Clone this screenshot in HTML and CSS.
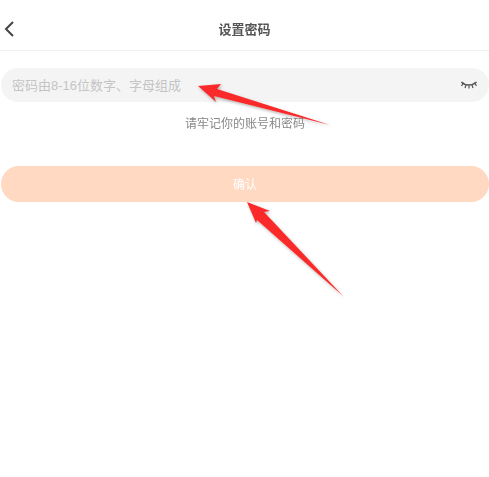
FILE: index.html
```html
<!DOCTYPE html>
<html lang="zh-CN">
<head>
    <meta charset="UTF-8">
    <meta name="viewport" content="width=device-width, initial-scale=1.0">
    <title>设置密码</title>
    <link rel="stylesheet" href="styles.css">
</head>
<body>
    <div class="page">
        <div class="header">
            <svg class="back" width="12" height="18" viewBox="0 0 12 18">
                <path d="M10 2 L3 9 L10 16" fill="none" stroke="#444" stroke-width="2"/>
            </svg>
            <span class="title">设置密码</span>
        </div>

        <div class="form">
            <div class="password-row">
                <span class="placeholder">密码由8-16位数字、字母组成</span>
                <svg class="eye" width="18" height="12" viewBox="0 0 18 12">
                    <path d="M1.5 3 C5 7 12 7 16.5 3" fill="none" stroke="#555" stroke-width="1.6"/>
                    <path d="M3 4.5 L1.5 7 M6 6 L5 9 M9 6.5 L9 9.5 M12 6 L13 9 M15 4.5 L16.5 7" fill="none" stroke="#555" stroke-width="1.2"/>
                </svg>
            </div>
            <div class="hint">请牢记你的账号和密码</div>
            <div class="confirm">确认</div>
        </div>

        <!-- red arrows drawn over the screenshot -->
        <svg class="arrows" width="489" height="477" viewBox="0 0 489 477">
            <defs>
                <filter id="arrow-shadow" x="-20%" y="-20%" width="140%" height="140%">
                    <feDropShadow dx="1" dy="1.5" stdDeviation="1.5" flood-color="#555" flood-opacity="0.45"/>
                </filter>
            </defs>
            <polygon filter="url(#arrow-shadow)" fill="#fb2a2c" points="198,86 221,84 217,89 330,125 214,96 216,102"/>
            <polygon filter="url(#arrow-shadow)" fill="#fb2a2c" points="247,202 270,211 264,212 343,296 257,220 256,223"/>
        </svg>
    </div>
</body>
</html>
```

FILE: styles.css
```css
body {
    margin: 0;
    background-color: #fff;
    font-family: "Liberation Sans", "Noto Sans CJK SC", sans-serif;
}

.page {
    position: relative;
    width: 489px;
    height: 477px;
    overflow: hidden;
    filter: blur(0.35px);
}

.header {
    position: relative;
    display: flex;
    justify-content: center;
    align-items: center;
    height: 51px;
    padding-top: 7px;
    box-sizing: border-box;
    border-bottom: 1px solid #f0f0f0;
}

.back {
    position: absolute;
    left: 3px;
    top: 20px;
}

.title {
    font-size: 13px;
    font-weight: bold;
    color: #555;
}

.form {
    display: flex;
    flex-direction: column;
    align-items: center;
    padding: 17px 0 0 1px;
}

.password-row {
    display: flex;
    justify-content: space-between;
    align-items: center;
    width: 100%;
    height: 34px;
    padding: 0 11px;
    box-sizing: border-box;
    border-radius: 17px;
    background-color: #f4f4f4;
}

.placeholder {
    margin-bottom: 2px;
    font-size: 13px;
    color: #c4c4c4;
}

.hint {
    margin-top: 14px;
    font-size: 12px;
    line-height: 17px;
    color: #888;
}

.confirm {
    display: flex;
    justify-content: center;
    align-items: center;
    width: 100%;
    height: 36px;
    margin-top: 33px;
    padding-bottom: 2px;
    box-sizing: border-box;
    border-radius: 18px;
    background-color: #ffd9c2;
    color: #fff;
    font-size: 12px;
}

.arrows {
    position: absolute;
    left: 0;
    top: 0;
}
```
